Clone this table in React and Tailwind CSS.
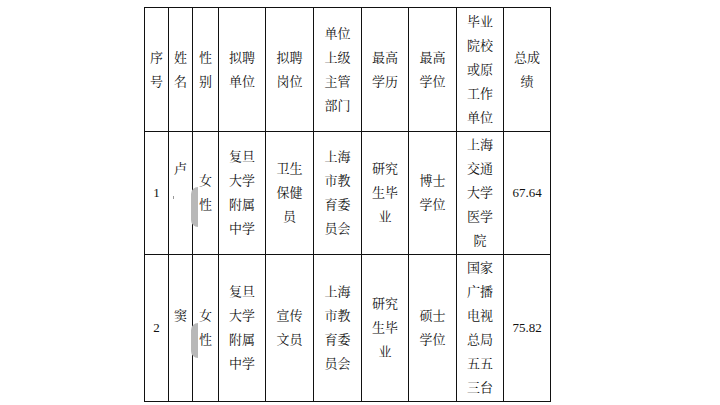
import React from "react";

const font = {
  fontFamily:
    '"Liberation Serif", "Noto Serif CJK SC", "Noto Sans CJK SC", serif',
};

const header = [
  ["序", "号"],
  ["姓", "名"],
  ["性", "别"],
  ["拟聘", "单位"],
  ["拟聘", "岗位"],
  ["单位", "上级", "主管", "部门"],
  ["最高", "学历"],
  ["最高", "学位"],
  ["毕业", "院校", "或原", "工作", "单位"],
  ["总成", "绩"],
];

const rows = [
  {
    cells: [
      ["1"],
      ["卢", "mark", ""],
      ["女", "性"],
      ["复旦", "大学", "附属", "中学"],
      ["卫生", "保健", "员"],
      ["上海", "市教", "育委", "员会"],
      ["研究", "生毕", "业"],
      ["博士", "学位"],
      ["上海", "交通", "大学", "医学", "院"],
      ["67.64"],
    ],
    blob: "top-[55px] h-[40px]",
  },
  {
    cells: [
      ["2"],
      ["窦", ""],
      ["女", "性"],
      ["复旦", "大学", "附属", "中学"],
      ["宣传", "文员"],
      ["上海", "市教", "育委", "员会"],
      ["研究", "生毕", "业"],
      ["硕士", "学位"],
      ["国家", "广播", "电视", "总局", "五五", "三台"],
      ["75.82"],
    ],
    blob: "top-[68px] h-[35px]",
  },
];

const Cell = ({ lines, children }) => {
  return (
    <div className="relative bg-white flex flex-col items-center justify-center">
      {lines.map((line, i) =>
        line === "mark" ? (
          <div key={i} className="h-[24px] w-full flex items-center pl-[4px]">
            <span className="block w-px h-[3px] bg-[#999] mt-[8px]" />
          </div>
        ) : (
          <div key={i} className="h-[24px] leading-[24px] whitespace-nowrap">
            {line || "\u00a0"}
          </div>
        )
      )}
      {children}
    </div>
  );
};

const App = () => {
  return (
    <div
      className="w-[720px] h-[405px] bg-white pl-[144px] pt-[7px] text-[13px] text-[#111]"
      style={font}
    >
      <div className="w-[407px] grid grid-cols-[23px_23px_25px_46px_47px_47px_46px_47px_46px_46px] grid-rows-[123px_122px_146px] gap-px p-px bg-[#111]">
        {header.map((lines, i) => (
          <Cell key={"h" + i} lines={lines} />
        ))}
        {rows.map((row, r) =>
          row.cells.map((lines, i) => (
            <Cell key={r + "-" + i} lines={lines}>
              {i === 2 && (
                <div
                  className={`absolute left-[-2px] w-[7px] rounded-l-full rounded-r-[3px] bg-[#b8b8b8] ${row.blob}`}
                />
              )}
            </Cell>
          ))
        )}
      </div>
    </div>
  );
};

export default App;
